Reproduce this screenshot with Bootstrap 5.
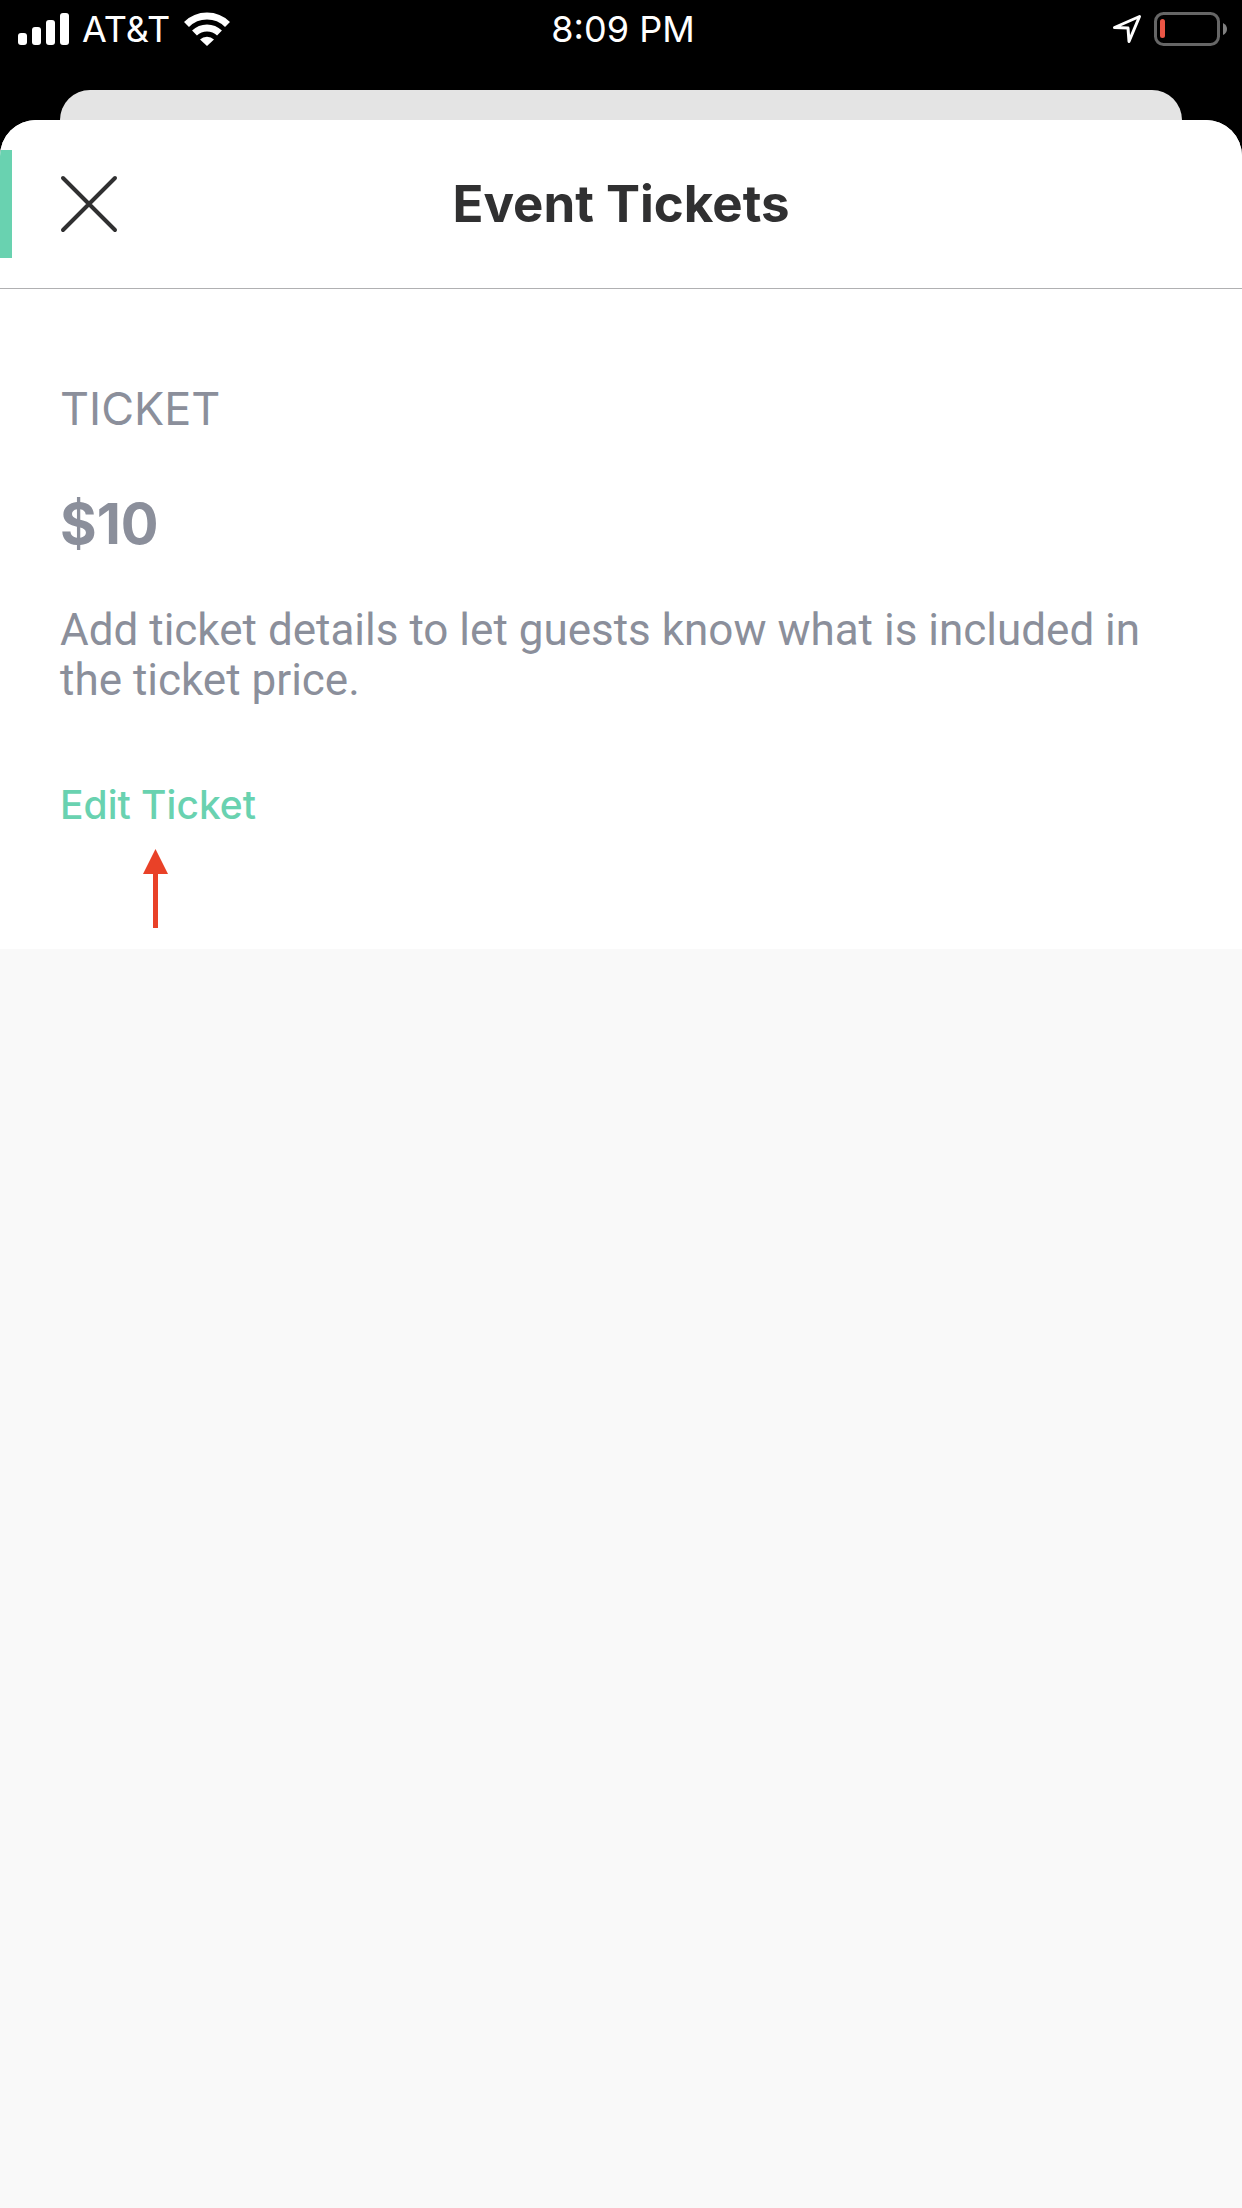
<!DOCTYPE html>
<html lang="en">
<head>
<meta charset="utf-8">
<meta name="viewport" content="width=device-width, initial-scale=1">
<title>Event Tickets</title>
<link href="https://cdn.jsdelivr.net/npm/bootstrap@5.3.0/dist/css/bootstrap.min.css" rel="stylesheet">
<style>
  body { font-family: Inter, "Liberation Sans", sans-serif; background: #000; color: #303031; }
  .status-bar { height: 90px; padding: 0 14px 32px; font-size: 36px; line-height: 58px; }
  .status-side { flex: 1 1 0; }
  .carrier { margin: 0 14px 0 12px; }
  .back-sheet { height: 60px; margin: 0 60px -30px; background: #e4e4e4; border-radius: 30px 30px 0 0; }
  .front-sheet { background: #f9f9f9; border-radius: 36px 36px 0 0; overflow: hidden; z-index: 1; }
  .sheet-header { height: 169px; border-bottom: 1px solid #b0b0b2; padding: 0 60px; }
  .sheet-header::before { content: ""; position: absolute; left: 0; top: 30px; width: 12px; height: 108px; background: #69d2b0; }
  .sheet-title { font-size: 51px; line-height: 60px; font-weight: 700; }
  .header-side { flex: 1 1 0; }
  .ticket-panel { padding: 90px 80px 20px 60px; color: #8b8f9b; }
  .ticket-name { font-size: 45px; line-height: 60px; margin-bottom: 50px; }
  .ticket-price { font-size: 56px; line-height: 70px; font-weight: 700; margin-bottom: 46px; }
  .ticket-details { font-family: Roboto, "Liberation Sans", sans-serif; font-size: 44px; line-height: 50px; margin-bottom: 70px; }
  .edit-link { font-size: 39px; line-height: 60px; font-weight: 500; color: #69d2b0; }
  .edit-arrow { margin: 14px 0 0 82px; }
</style>
<script src="https://cdn.jsdelivr.net/npm/bootstrap@5.3.0/dist/js/bootstrap.bundle.min.js"></script>
</head>
<body class="d-flex flex-column min-vh-100">
  <header class="status-bar d-flex align-items-center text-white">
    <div class="status-side d-flex align-items-center ps-1">
      <svg width="52" height="34" viewBox="0 0 52 34" fill="#fff" aria-hidden="true"><rect y="21" width="9" height="12" rx="3"/><rect x="14" y="15" width="9" height="18" rx="3"/><rect x="28" y="8" width="9" height="25" rx="3"/><rect x="42" y="1" width="9" height="32" rx="3"/></svg>
      <span class="carrier">AT&amp;T</span>
      <svg width="46" height="34" viewBox="0 0 46 34" aria-hidden="true"><g fill="none" stroke="#fff" stroke-width="7"><path d="M2.500 12.500a29 29 0 0 1 41 0"/><path d="M10.500 21a18 18 0 0 1 25 0"/></g><path d="M16 27.500a10 10 0 0 1 14 0L23 34z" fill="#fff"/></svg>
    </div>
    <span>8:09 PM</span>
    <div class="status-side d-flex align-items-center justify-content-end gap-2">
      <svg width="32" height="32" viewBox="0 0 32 32" fill="none" stroke="#fff" stroke-width="3" stroke-linejoin="round" aria-hidden="true"><path d="M2.500 14.500 27.500 3.500 17 28.500 16 15z"/></svg>
      <svg width="76" height="36" viewBox="0 0 76 36" aria-hidden="true"><rect x="3.500" y="2.500" width="63" height="31" rx="8" fill="none" stroke="#666" stroke-width="3"/><rect x="8" y="8" width="5" height="19" rx="2.500" fill="#eb5545"/><path d="M71 12q4 2 4 6t-4 6z" fill="#808080"/></svg>
    </div>
  </header>
  <div class="back-sheet"></div>
  <main class="front-sheet position-relative flex-grow-1">
    <div class="sheet-header d-flex align-items-center bg-white">
      <div class="header-side d-flex">
        <button type="button" class="btn p-0 border-0 d-flex" aria-label="Close"><svg width="58" height="58" viewBox="0 0 58 58" stroke="#303031" stroke-width="4" stroke-linecap="round"><path d="M3 3 55 55M55 3 3 55"/></svg></button>
      </div>
      <h1 class="sheet-title mb-0">Event Tickets</h1>
      <div class="header-side"></div>
    </div>
    <section class="ticket-panel bg-white">
      <h2 class="ticket-name fw-normal">TICKET</h2>
      <p class="ticket-price">$10</p>
      <p class="ticket-details">Add ticket details to let guests know what is included in the ticket price.</p>
      <a href="#" class="edit-link d-inline-block align-top text-decoration-none">Edit Ticket</a>
      <svg class="edit-arrow d-block" width="26" height="80" viewBox="0 0 26 80" fill="#e94128" aria-hidden="true"><path d="M13.500 0 26 25H16V79H11V25H1z"/></svg>
    </section>
  </main>
</body>
</html>
